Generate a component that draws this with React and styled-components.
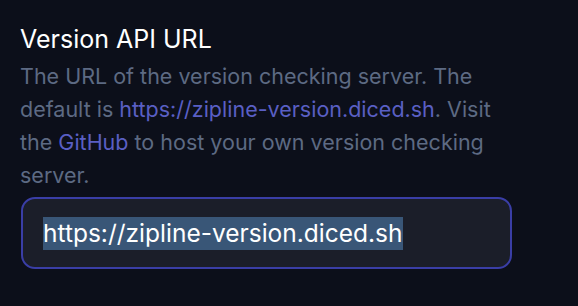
import React from "react";
import styled, { createGlobalStyle } from "styled-components";

const Global = createGlobalStyle`
  html, body { margin: 0; padding: 0; background: #0c0f1a; }
  body { font-family: "Inter", "Noto Sans", sans-serif; -webkit-font-smoothing: antialiased; }
`;

const Page = styled.div`
  width: 578px;
  height: 306px;
  box-sizing: border-box;
  padding: 24px 66px 0 20px;
  background: #0c0f1a;
  display: flex;
  flex-direction: column;
`;

const Label = styled.label`
  font-size: 25px;
  line-height: 30px;
  font-weight: 400;
  color: #ffffff;
`;

const Description = styled.p`
  margin: 6px 0 0;
  font-size: 21.5px;
  line-height: 33px;
  color: #5d6a83;
`;

const Link = styled.a`
  color: #5a5fc4;
  text-decoration: none;
`;

const Field = styled.div`
  margin-top: 5px;
  margin-left: 1px;
  height: 72px;
  box-sizing: border-box;
  border: 2px solid #3a3ea6;
  border-radius: 14px;
  background: #1b1e29;
  padding: 0 20px;
  display: flex;
  align-items: center;
`;

const Selected = styled.span`
  background: #395677;
  color: #ffffff;
  font-size: 24.5px;
  line-height: 33px;
`;

export default function App() {
  return (
    <>
      <Global />
      <Page>
        <Label>Version API URL</Label>
        <Description>
          The URL of the version checking server. The default is{" "}
          <Link href="#">https://zipline-version.diced.sh</Link>. Visit the{" "}
          <Link href="#">GitHub</Link> to host your own version checking server.
        </Description>
        <Field>
          <Selected>https://zipline-version.diced.sh</Selected>
        </Field>
      </Page>
    </>
  );
}
